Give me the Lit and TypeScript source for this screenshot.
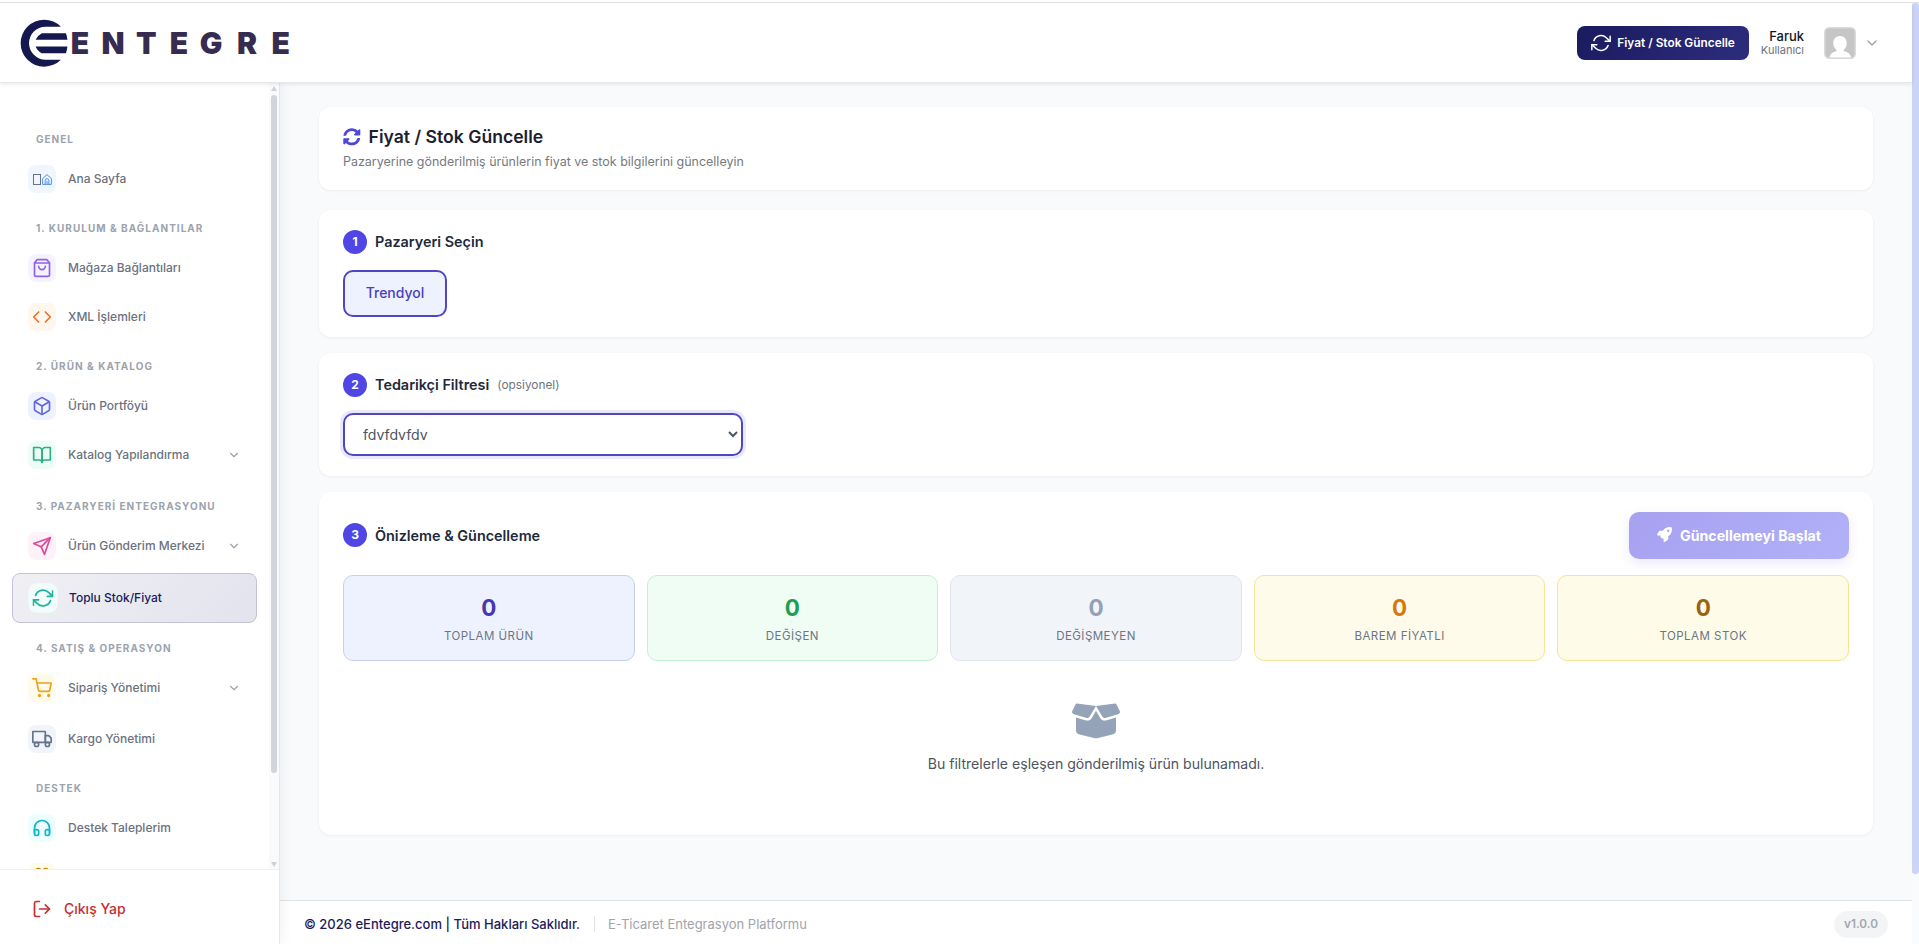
import { LitElement, html, css, svg, nothing } from "lit";
import { customElement, property, state } from "lit/decorators.js";
import { classMap } from "lit/directives/class-map.js";

const ICONS: Record<string, any> = {
  bag: svg`<path d="M6 2 3 6v14a2 2 0 0 0 2 2h14a2 2 0 0 0 2-2V6l-3-4z"/><path d="M3 6h18"/><path d="M16 10a4 4 0 0 1-8 0"/>`,
  code: svg`<path d="m16 18 6-6-6-6"/><path d="m8 6-6 6 6 6"/>`,
  box: svg`<path d="M21 16V8a2 2 0 0 0-1-1.73l-7-4a2 2 0 0 0-2 0l-7 4A2 2 0 0 0 3 8v8a2 2 0 0 0 1 1.73l7 4a2 2 0 0 0 2 0l7-4A2 2 0 0 0 21 16z"/><path d="M3.27 6.96 12 12.01l8.73-5.05"/><path d="M12 22.08V12"/>`,
  book: svg`<path d="M2 3h6a4 4 0 0 1 4 4v14a3 3 0 0 0-3-3H2z"/><path d="M22 3h-6a4 4 0 0 0-4 4v14a3 3 0 0 1 3-3h7z"/>`,
  send: svg`<path d="M22 2 11 13"/><path d="m22 2-7 20-4-9-9-4 20-7z"/>`,
  refresh: svg`<path d="M23 4v6h-6"/><path d="M1 20v-6h6"/><path d="M3.51 9a9 9 0 0 1 14.85-3.36L23 10M1 14l4.64 4.36A9 9 0 0 0 20.49 15"/>`,
  cart: svg`<circle cx="9" cy="21" r="1"/><circle cx="20" cy="21" r="1"/><path d="M1 1h4l2.68 13.39a2 2 0 0 0 2 1.61h9.72a2 2 0 0 0 2-1.61L23 6H6"/>`,
  truck: svg`<path d="M1 3h15v13H1z"/><path d="M16 8h4l3 3v5h-7z"/><circle cx="5.5" cy="18.5" r="2.5"/><circle cx="18.5" cy="18.5" r="2.5"/>`,
  headphones: svg`<path d="M3 18v-6a9 9 0 0 1 18 0v6"/><path d="M21 19a2 2 0 0 1-2 2h-1a2 2 0 0 1-2-2v-3a2 2 0 0 1 2-2h3zM3 19a2 2 0 0 0 2 2h1a2 2 0 0 0 2-2v-3a2 2 0 0 0-2-2H3z"/>`,
  gift: svg`<path d="M20 12v10H4V12"/><path d="M2 7h20v5H2z"/><path d="M12 22V7"/><path d="M12 7H7.5a2.5 2.5 0 0 1 0-5C11 2 12 7 12 7z"/><path d="M12 7h4.500a2.500 2.500 0 0 0 0-5C13 2 12 7 12 7z"/>`,
  logout: svg`<path d="M9 21H5a2 2 0 0 1-2-2V5a2 2 0 0 1 2-2h4"/><path d="m16 17 5-5-5-5"/><path d="M21 12H9"/>`,
  chevron: svg`<path d="m6 9 6 6 6-6"/>`,
};

const icon = (name: string) => html`<svg class="icon" viewBox="0 0 24 24" fill="none" stroke="currentColor"
  stroke-width="2" stroke-linecap="round" stroke-linejoin="round">${ICONS[name]}</svg>`;

interface Item { label: string; icon: string; tone: string; sub?: boolean; active?: boolean }
const MENU: { title: string; items: Item[] }[] = [
  { title: "GENEL", items: [{ label: "Ana Sayfa", icon: "home", tone: "blue" }] },
  { title: "1. KURULUM & BAĞLANTILAR", items: [
    { label: "Mağaza Bağlantıları", icon: "bag", tone: "violet" },
    { label: "XML İşlemleri", icon: "code", tone: "orange" } ] },
  { title: "2. ÜRÜN & KATALOG", items: [
    { label: "Ürün Portföyü", icon: "box", tone: "indigo" },
    { label: "Katalog Yapılandırma", icon: "book", tone: "green", sub: true } ] },
  { title: "3. PAZARYERİ ENTEGRASYONU", items: [
    { label: "Ürün Gönderim Merkezi", icon: "send", tone: "pink", sub: true },
    { label: "Toplu Stok/Fiyat", icon: "refresh", tone: "teal", active: true } ] },
  { title: "4. SATIŞ & OPERASYON", items: [
    { label: "Sipariş Yönetimi", icon: "cart", tone: "amber", sub: true },
    { label: "Kargo Yönetimi", icon: "truck", tone: "slate" } ] },
  { title: "DESTEK", items: [
    { label: "Destek Taleplerim", icon: "headphones", tone: "cyan" },
    { label: "", icon: "gift", tone: "gold" } ] },
];

@customElement("app-header")
class AppHeader extends LitElement {
  static styles = css`
    :host { display: flex; align-items: center; justify-content: space-between; box-sizing: border-box; height: 80px;
      padding: 0 32px 0 20px; background: #fff; border-bottom: 1px solid #e5e7eb;
      box-shadow: 0 1px 4px rgba(15, 23, 42, .1); position: relative; z-index: 2; }
    .logo { display: block; width: 272px; height: 48px; }
    .word { font: 900 30px Inter, sans-serif; fill: #352c50; }
    .right { display: flex; align-items: center; }
    .update { display: flex; align-items: center; gap: 6px; height: 34px; padding: 0 14px; border: 0; border-radius: 8px;
      background: linear-gradient(135deg, #1a1a5e, #2d2d7f); color: #fff; font: 600 11.85px Inter, sans-serif; }
    .icon { display: block; width: 20px; height: 20px; stroke-width: 1.8; }
    .who { display: flex; flex-direction: column; align-items: flex-end; margin-left: 12px; }
    .name { font: 500 13px/14px Inter, sans-serif; color: #111827; }
    .role { font: 400 11px/14px Inter, sans-serif; color: #6b7280; }
    .avatar { display: block; width: 32px; height: 32px; margin-left: 20px; }
    .chev { margin-left: 8px; color: #9ca3af; }
    .chev .icon { width: 16px; height: 16px; stroke-width: 2; }
  `;
  render() {
    return html`
      <svg class="logo" viewBox="0 0 272 48">
        <g fill="#15174f">
          <path d="M40.900 7.700A23.500 23.500 0 1 0 40.900 40.700H25.500A16.500 16.500 0 0 1 25.500 7.700z"/>
          <path d="M21.800 14.200H45.900q1.200 3 1.500 6.600H15.600q1.700-4.200 6.200-6.600z"/>
          <path d="M15.600 27.500H47.400q-.3 3.600-1.500 6.700H21.800q-4.500-2.400-6.200-6.700z"/>
        </g>
        <text class="word" y="35.200" x="50.800 81.600 116 149.800 179.800 217 251.500">ENTEGRE</text>
      </svg>
      <div class="right">
        <button class="update">${icon("refresh")}<span>Fiyat / Stok Güncelle</span></button>
        <div class="who"><span class="name">Faruk</span><span class="role">Kullanıcı</span></div>
        <svg class="avatar" viewBox="0 0 32 32">
          <rect x=".75" y=".75" width="30.500" height="30.500" rx="4.500" fill="#c6c6c6" stroke="#d9dadd" stroke-width="1.500"/>
          <path d="M16 9c4 0 6.700 3 6.700 7.300 0 3-1.400 5.400-3 6.700v1c4 .9 7 3 7.300 6.500H5.500c.3-3.500 3.300-5.600 7-6.500v-1c-1.700-1.300-3.200-3.700-3.200-6.700C9.300 12 12 9 16 9z" fill="#fff"/>
        </svg>
        <span class="chev">${icon("chevron")}</span>
      </div>`;
  }
}

@customElement("side-nav")
class SideNav extends LitElement {
  static styles = css`
    :host { display: flex; flex-direction: column; box-sizing: border-box; width: 280px; background: #fff;
      border-right: 1px solid #e5e7eb; box-shadow: 2px 0 12px rgba(15, 23, 42, .06); position: relative; z-index: 1; }
    .scroll { flex: 1; min-height: 0; display: flex; }
    .menu { flex: 1; overflow: hidden; padding: 32px 12px 0; }
    .title { height: 40px; box-sizing: border-box; padding: 17px 0 0 24px; font: 700 10px/14px Inter, sans-serif;
      letter-spacing: 1.02px; color: #9ca3af; white-space: nowrap; }
    .item { display: flex; align-items: center; box-sizing: border-box; height: 48px; margin-bottom: 1px; padding: 0 16px 0 16px;
      gap: 12px; font: 500 12px/18px Inter, sans-serif; color: #6b7280; white-space: nowrap; width: 245px; }
    .sub { margin-bottom: 3px; }
    .active { height: 50px; border: 1px solid #c3c2d6; border-radius: 8px; color: #1a1a5e;
      background: linear-gradient(135deg, #efeff4, #e3e3ee); }
    .tile { display: flex; align-items: center; justify-content: center; width: 28px; height: 28px; border-radius: 8px; }
    .active .tile { transform: scale(1.05); }
    .icon { display: block; width: 20px; height: 20px; }
    .label { flex: 1; }
    .more { color: #9ca3af; }
    .more .icon { width: 14px; height: 14px; }
    .blue { background: #eff6ff; color: #4f92f0; }
    .violet { background: #f5f3ff; color: #8f63e8; }
    .orange { background: #fff7ed; color: #ea7327; }
    .indigo { background: #eef2ff; color: #6366dd; }
    .green { background: #ecfdf5; color: #2bb083; }
    .pink { background: #fdf2f8; color: #e0489a; }
    .teal { background: #f0fdfa; color: #21b3a0; }
    .amber { background: #fffbeb; color: #f0a020; }
    .slate { background: #f1f5f9; color: #64748b; }
    .cyan { background: #ecfeff; color: #12b3cf; }
    .gold { background: #fefce8; color: #c08a10; }
    .glyph { width: 6px; height: 9px; border: 1px solid #6b7280; margin-right: 1px; }
    .house { display: block; width: 10px; height: 11px; }
    .bar { display: flex; flex-direction: column; align-items: center; justify-content: space-between; width: 10px; background: #f9fafb; padding: 3px 0 2px; }
    .thumb { width: 6px; flex: 1; margin: 4px 0 89px; border-radius: 3px; background: #d1d5db; }
    .arrow { display: block; width: 6px; height: 5px; fill: #ced2d8; }
    .exit { display: flex; align-items: center; gap: 12px; box-sizing: border-box; height: 75px; padding: 4px 0 0 32px; border-top: 1px solid #eef0f3;
      font: 500 14px/20px Inter, sans-serif; color: #c62f2f; }
  `;
  @property({ attribute: false }) menu = MENU;
  render() {
    return html`
      <div class="scroll">
        <nav class="menu">
          ${this.menu.map(g => html`
            <div class="title">${g.title}</div>
            ${g.items.map(i => html`
              <div class=${classMap({ item: true, sub: !!i.sub, active: !!i.active })}>
                <span class="tile ${i.tone}">${i.icon === "home"
                  ? html`<span class="glyph"></span><svg class="house" viewBox="0 0 10 11" fill="none" stroke="currentColor" stroke-linejoin="round"><path d="M.6 4.600 5 .7l4.400 3.900v5.800H.6z"/><path d="M3.200 10.300V6.500a1.800 1.800 0 0 1 3.600 0v3.800M5 7v3"/></svg>`
                  : icon(i.icon)}</span>
                <span class="label">${i.label}</span>
                ${i.sub ? html`<span class="more">${icon("chevron")}</span>` : nothing}
              </div>`)}`)}
        </nav>
        <div class="bar">
          <svg class="arrow" viewBox="0 0 6 5"><path d="M3 0l3 5H0z"/></svg>
          <div class="thumb"></div>
          <svg class="arrow" viewBox="0 0 6 5"><path d="M3 5l3-5H0z"/></svg>
        </div>
      </div>
      <div class="exit">${icon("logout")}<span>Çıkış Yap</span></div>`;
  }
}

@customElement("app-root")
class AppRoot extends LitElement {
  static styles = css`
    :host { display: block; box-sizing: border-box; width: 100%; height: 951px; padding-top: 2px; background: #fff; overflow: hidden; font-family: Inter, sans-serif; }
    .page { display: flex; height: 941px; border-top: 1px solid #dfe1e4; overflow: hidden; }
    .app { flex: 1; display: flex; flex-direction: column; min-width: 0; }
    .track { width: 7px; background: #fafbfd; }
    .handle { height: 871px; border-radius: 3px; background: #cbd4f6; }
    .body { flex: 1; min-height: 0; display: flex; }
    .col { flex: 1; min-width: 0; display: flex; flex-direction: column; background: #f9fafc; }
    main { flex: 1; display: flex; flex-direction: column; gap: 16px; padding: 24px 39px 0; }
    .card { box-sizing: border-box; padding: 20px 24px; border-radius: 12px; background: #fff; box-shadow: 0 1px 3px rgba(15, 23, 42, .06); }
    .intro { height: 83px; padding-top: 17px; margin-bottom: 4px; }
    h1 { display: flex; align-items: center; gap: 8px; margin: 0; font: 600 17.600px/26px Inter, sans-serif; color: #1b2130; }
    .sync { width: 17.600px; height: 17.600px; fill: #4f46dc; }
    .lead { margin: 2px 0 0; font: 400 12.480px/20px Inter, sans-serif; color: #75797f; }
    .step { display: flex; align-items: center; gap: 8px; height: 24px; font: 600 14.400px/24px Inter, sans-serif; color: #1e293b; }
    .no { display: flex; align-items: center; justify-content: center; width: 24px; height: 24px; border-radius: 50%; background: #4f46e5; color: #fff; font: 700 12px/24px Inter, sans-serif; }
    .head .no { margin-top: -2px; }
    .opt { font: 400 11.840px/24px Inter, sans-serif; color: #6f747b; }
    .market { box-sizing: border-box; width: 104px; height: 47px; margin-top: 16px; padding: 0 0 2px; border: 2px solid #5046c4; border-radius: 10px; background: #eef2ff; color: #4a3fc0; font: 500 14px Inter, sans-serif; display: block; }
    select { display: block; box-sizing: border-box; width: 400px; height: 43px; margin-top: 16px; padding: 0 14px; border: 2px solid #5046c4; border-radius: 10px; background: #fff; color: #4b5563; font: 400 14.080px Inter, sans-serif; box-shadow: 0 0 0 3px rgba(79, 70, 229, .12); outline: none; }
    .head { display: flex; align-items: center; justify-content: space-between; height: 47px; }
    .start { display: flex; align-items: center; gap: 8px; box-sizing: border-box; width: 220px; height: 47px; padding: 0 0 0 28px; border: 0; border-radius: 10px;
      color: #fff; font: 700 14.200px Inter, sans-serif; background: linear-gradient(135deg, #a7a1f0, #b1b1f8); box-shadow: 0 4px 12px rgba(79, 70, 229, .12); }
    .rocket { width: 15px; height: 15px; fill: #fff; margin-top: -3px; }
    .stats { display: grid; grid-template-columns: repeat(5, 1fr); gap: 12px; margin-top: 16px; }
    .stat { box-sizing: border-box; height: 86px; padding-top: 18px; border: 1px solid; border-radius: 10px; text-align: center; }
    .num { font: 700 22.400px/27px Inter, sans-serif; }
    .cap { margin-top: 6px; font: 400 11.520px/18px Inter, sans-serif; letter-spacing: .46px; color: #6b7684; }
    .total { background: #eef2ff; border-color: #c7cfee; } .total .num { color: #4438b4; }
    .changed { background: #f0fdf4; border-color: #c3efd2; } .changed .num { color: #1f9d50; }
    .same { background: #f1f4f9; border-color: #e0e5ec; } .same .num { color: #94a0b6; }
    .tier { background: #fffbeb; border-color: #f7e49b; } .tier .num { color: #d27a0c; }
    .stock { background: #fefbe8; border-color: #f5e493; } .stock .num { color: #9b620f; }
    .last { height: 343px; }
    .empty { display: flex; flex-direction: column; align-items: center; padding-top: 40px; font: 400 14.080px/20px Inter, sans-serif; color: #4d5562; gap: 13px; }
    .open { width: 50px; height: 40px; fill: #94a3b8; }
    footer { display: flex; align-items: center; box-sizing: border-box; height: 44px; padding: 3px 24px 0; background: #fff; border-top: 1px solid #dfe2e6; font: 400 13px/18px Inter, sans-serif; color: #a0a4ab; }
    .copy { font-weight: 500; color: #1d1b58; }
    .sep { width: 1px; height: 16px; margin: 0 13.500px; background: #e0e2e6; }
    .ver { margin-left: auto; width: 54px; height: 27px; border-radius: 14px; background: #f3f4f6; font: 600 11.800px/27px Inter, sans-serif; text-align: center; color: #a3a7ae; }
  `;
  @state() stats = [
    ["total", "TOPLAM ÜRÜN"], ["changed", "DEĞİŞEN"], ["same", "DEĞİŞMEYEN"], ["tier", "BAREM FİYATLI"], ["stock", "TOPLAM STOK"],
  ];
  render() {
    return html`
      <div class="page">
        <div class="app">
          <app-header></app-header>
          <div class="body">
            <side-nav></side-nav>
            <div class="col">
              <main>
                <section class="card intro">
                  <h1><svg class="sync" viewBox="0 0 512 512"><path d="M370.720 133.280C339.458 104.008 298.888 87.962 255.848 88c-77.458.068-144.328 53.178-162.791 126.850-1.344 5.363-6.122 9.150-11.651 9.150H24.103c-7.498 0-13.194-6.807-11.807-14.176C33.933 94.924 134.813 8 256 8c66.448 0 126.791 26.136 171.315 68.685L463.030 40.970C478.149 25.851 504 36.559 504 57.941V192c0 13.255-10.745 24-24 24H345.941c-21.382 0-32.090-25.851-16.971-40.971l41.750-41.749zM32 296h134.059c21.382 0 32.090 25.851 16.971 40.971l-41.750 41.750c31.262 29.273 71.835 45.319 114.876 45.280 77.418-.070 144.315-53.144 162.787-126.849 1.344-5.363 6.122-9.150 11.651-9.150h57.304c7.498 0 13.194 6.807 11.807 14.176C478.067 417.076 377.187 504 256 504c-66.448 0-126.791-26.136-171.315-68.685L48.970 471.030C33.851 486.149 8 475.441 8 454.059V320c0-13.255 10.745-24 24-24z"/></svg>Fiyat / Stok Güncelle</h1>
                  <p class="lead">Pazaryerine gönderilmiş ürünlerin fiyat ve stok bilgilerini güncelleyin</p>
                </section>
                <section class="card">
                  <div class="step"><span class="no">1</span><span>Pazaryeri Seçin</span></div>
                  <button class="market">Trendyol</button>
                </section>
                <section class="card">
                  <div class="step"><span class="no">2</span><span>Tedarikçi Filtresi</span><span class="opt">(opsiyonel)</span></div>
                  <select><option>fdvfdvfdv</option></select>
                </section>
                <section class="card last">
                  <div class="head">
                    <div class="step"><span class="no">3</span><span>Önizleme &amp; Güncelleme</span></div>
                    <button class="start"><svg class="rocket" viewBox="0 0 512 512"><path d="M156.600 384.900L125.700 354c-8.500-8.500-11.500-20.800-7.700-32.200c3-8.900 7-20.500 11.800-33.800L24 288c-8.600 0-16.600-4.600-20.900-12.100s-4.200-16.700 .2-24.100l52.500-88.500c13-21.900 36.500-35.300 61.900-35.300l82.300 0c2.400-4 4.800-7.700 7.200-11.300C289.100-4.100 411.100-8.100 483.900 5.300c11.600 2.100 20.600 11.200 22.800 22.800c13.400 72.900 9.300 194.800-111.400 276.700c-3.500 2.400-7.300 4.800-11.300 7.200v82.300c0 25.400-13.400 49-35.300 61.900l-88.500 52.500c-7.400 4.400-16.600 4.500-24.100 .2s-12.100-12.200-12.100-20.900V380.800c-14.100 4.900-26.400 8.900-35.700 11.900c-11.200 3.600-23.400 .5-31.800-7.800zM384 168a40 40 0 1 0 0-80 40 40 0 1 0 0 80z"/></svg>Güncellemeyi Başlat</button>
                  </div>
                  <div class="stats">
                    ${this.stats.map(([k, t]) => html`<div class="stat ${k}"><div class="num">0</div><div class="cap">${t}</div></div>`)}
                  </div>
                  <div class="empty">
                    <svg class="open" viewBox="0 0 640 512"><path d="M58.900 42.100c3-6.100 9.600-9.600 16.300-8.700L320 64 564.800 33.400c6.700-.8 13.300 2.700 16.300 8.700l41.700 83.400c9 17.900-.6 39.600-19.800 45.100L439.600 217.300c-13.900 4-28.800-1.900-36.200-14.300L320 64 236.600 203c-7.400 12.400-22.300 18.300-36.200 14.300L37.100 170.600c-19.300-5.500-28.800-27.200-19.800-45.100L58.900 42.100zM321.100 128l54.900 91.400c14.900 24.800 44.600 36.600 72.500 28.600L576 211.600v167c0 22-15 41.200-36.400 46.600l-204.100 51c-10.200 2.600-20.900 2.600-31 0l-204.100-51C79 419.700 64 400.500 64 378.600v-167L191.600 248c27.800 8 57.600-3.800 72.500-28.600L318.900 128h2.200z"/></svg>
                    <span>Bu filtrelerle eşleşen gönderilmiş ürün bulunamadı.</span>
                  </div>
                </section>
              </main>
              <footer>
                <span class="copy">© 2026 eEntegre.com | Tüm Hakları Saklıdır.</span>
                <span class="sep"></span>
                <span>E-Ticaret Entegrasyon Platformu</span>
                <span class="ver">v1.0.0</span>
              </footer>
            </div>
          </div>
        </div>
        <div class="track"><div class="handle"></div></div>
      </div>`;
  }
}
